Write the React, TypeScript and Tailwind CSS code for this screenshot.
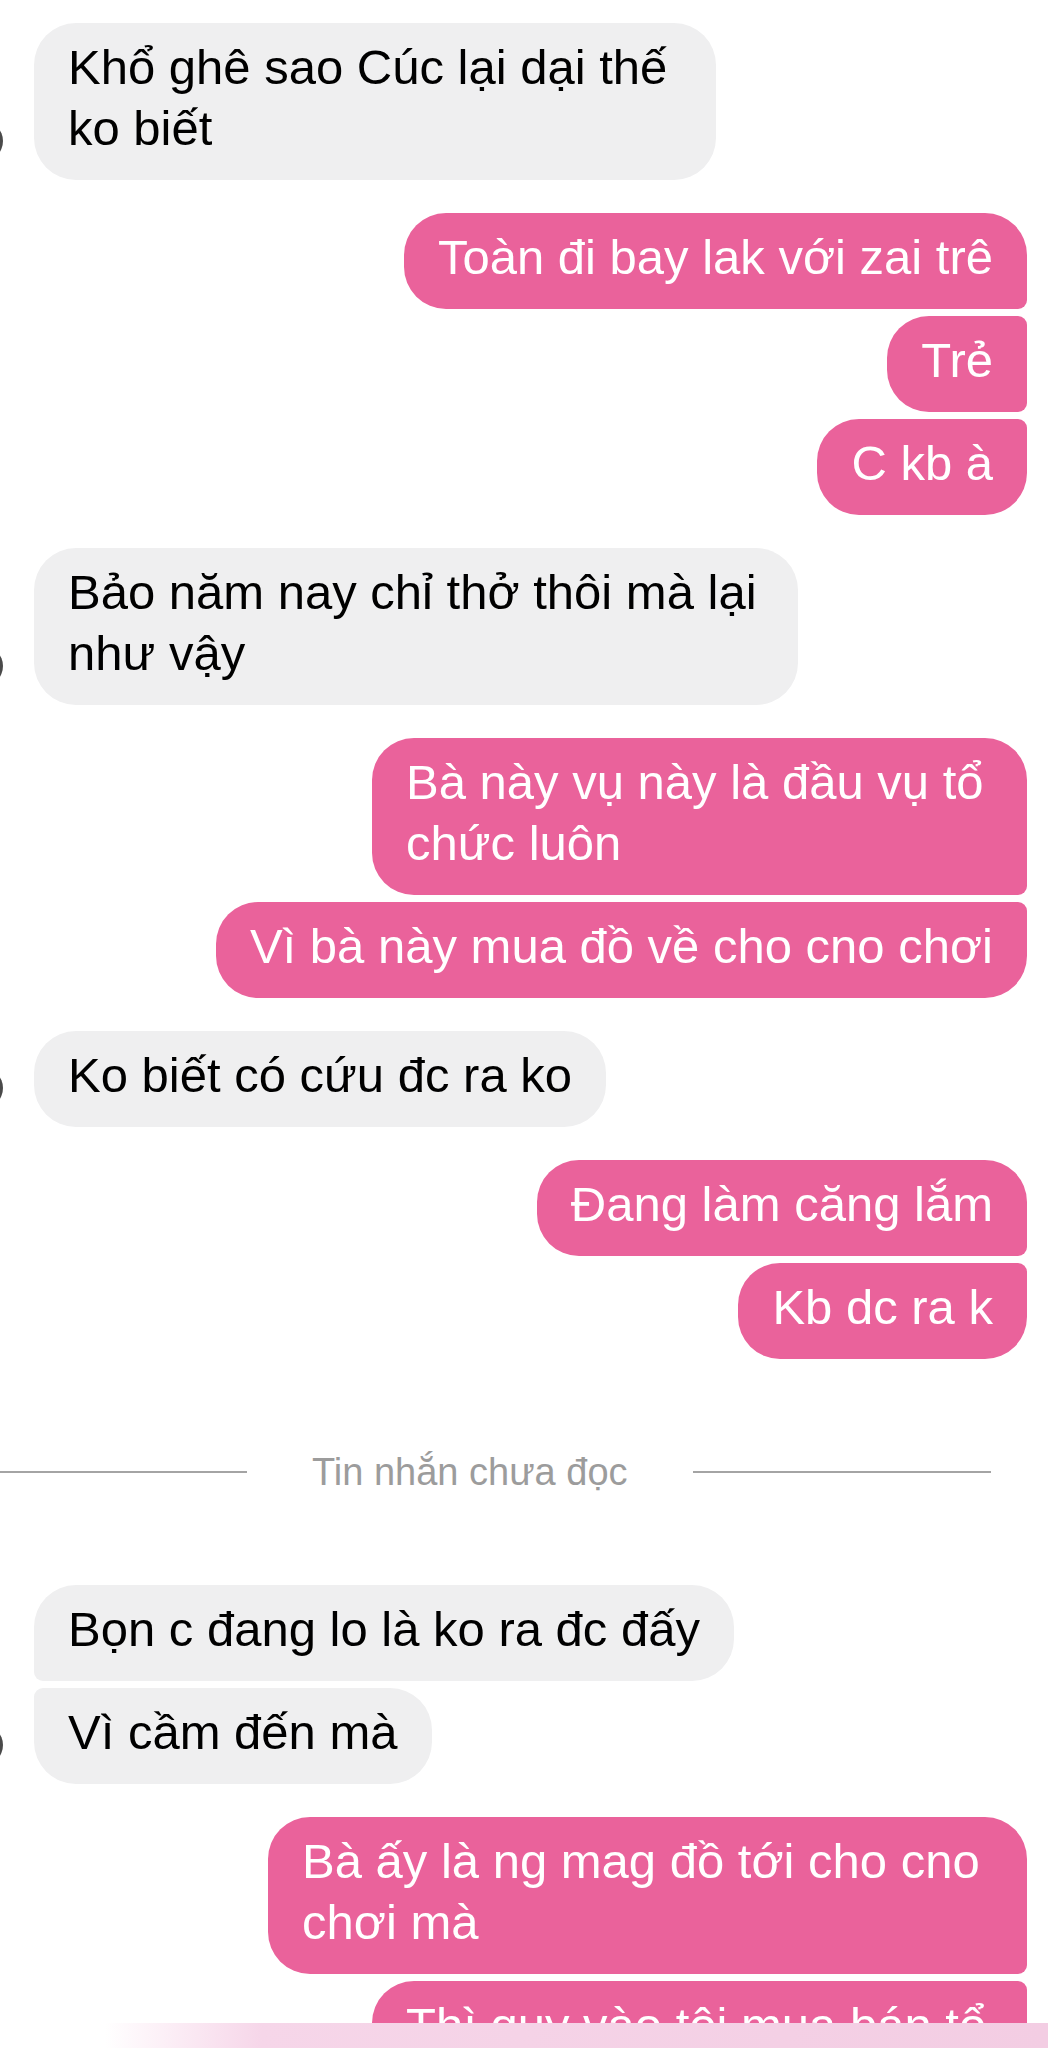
type Pos = "single" | "first" | "middle" | "last";

type Msg = { lines: string[]; pos: Pos; w?: string };
type Group = { from: "me" | "them"; msgs: Msg[] };

// corner shapes, Messenger style: grouped bubbles get a tight corner on the inner side
const sentCorners: Record<Pos, string> = {
  single: "rounded-tl-[42px] rounded-bl-[42px] rounded-tr-[42px] rounded-br-[42px]",
  first: "rounded-tl-[42px] rounded-bl-[42px] rounded-tr-[42px] rounded-br-[9px]",
  middle: "rounded-tl-[42px] rounded-bl-[42px] rounded-tr-[9px] rounded-br-[9px]",
  last: "rounded-tl-[42px] rounded-bl-[42px] rounded-tr-[9px] rounded-br-[42px]",
};

const recvCorners: Record<Pos, string> = {
  single: "rounded-tl-[42px] rounded-bl-[42px] rounded-tr-[42px] rounded-br-[42px]",
  first: "rounded-tl-[42px] rounded-bl-[9px] rounded-tr-[42px] rounded-br-[42px]",
  middle: "rounded-tl-[9px] rounded-bl-[9px] rounded-tr-[42px] rounded-br-[42px]",
  last: "rounded-tl-[9px] rounded-bl-[42px] rounded-tr-[42px] rounded-br-[42px]",
};

// wrapped bubbles keep the width of the wrap box, not of the text
const before: Group[] = [
  { from: "them", msgs: [{ lines: ["Khổ ghê sao Cúc lại dại thế", "ko biết"], pos: "single", w: "w-[682px]" }] },
  {
    from: "me",
    msgs: [
      { lines: ["Toàn đi bay lak với zai trê"], pos: "first" },
      { lines: ["Trẻ"], pos: "middle" },
      { lines: ["C kb à"], pos: "last" },
    ],
  },
  { from: "them", msgs: [{ lines: ["Bảo năm nay chỉ thở thôi mà lại", "như vậy"], pos: "single", w: "w-[764px]" }] },
  {
    from: "me",
    msgs: [
      { lines: ["Bà này vụ này là đầu vụ tổ", "chức luôn"], pos: "first", w: "w-[655px]" },
      { lines: ["Vì bà này mua đồ về cho cno chơi"], pos: "last" },
    ],
  },
  { from: "them", msgs: [{ lines: ["Ko biết có cứu đc ra ko"], pos: "single" }] },
  {
    from: "me",
    msgs: [
      { lines: ["Đang làm căng lắm"], pos: "first" },
      { lines: ["Kb dc ra k"], pos: "last" },
    ],
  },
];

const after: Group[] = [
  {
    from: "them",
    msgs: [
      { lines: ["Bọn c đang lo là ko ra đc đấy"], pos: "first" },
      { lines: ["Vì cầm đến mà"], pos: "last" },
    ],
  },
  {
    from: "me",
    msgs: [
      { lines: ["Bà ấy là ng mag đồ tới cho cno", "chơi mà"], pos: "first", w: "w-[759px]" },
      { lines: ["Thì quy vào tội mua bán tổ"], pos: "last", w: "w-[655px]" },
    ],
  },
];

const Bubble = ({ msg, mine }: { msg: Msg; mine: boolean }) => (
  <div
    className={`px-[34px] pt-[14px] pb-[21px] text-[49px] leading-[61px] whitespace-nowrap ${msg.w ?? ""} ${
      mine ? `bg-[#ea629b] text-white ${sentCorners[msg.pos]}` : `bg-[#efeff0] text-black ${recvCorners[msg.pos]}`
    }`}
  >
    {msg.lines.map((l, i) => (
      <div key={i}>{l}</div>
    ))}
  </div>
);

const ChatGroup = ({ group }: { group: Group }) => {
  if (group.from === "me") {
    return (
      <div className="flex flex-col items-end gap-[7px] pr-[21px]">
        {group.msgs.map((m, i) => (
          <Bubble key={i} msg={m} mine />
        ))}
      </div>
    );
  }
  return (
    <div className="flex items-end gap-[31px]">
      {/* avatar, mostly scrolled off the left edge */}
      <div className="w-[40px] h-[40px] -ml-[37px] mb-[19px] shrink-0 rounded-full bg-[#4a4a4a]" />
      <div className="flex flex-col items-start gap-[7px]">
        {group.msgs.map((m, i) => (
          <Bubble key={i} msg={m} mine={false} />
        ))}
      </div>
    </div>
  );
};

export default function App() {
  return (
    <div className="relative h-[2048px] w-[1048px] overflow-hidden bg-white font-['Liberation_Sans',Arial,sans-serif]">
      <div className="flex flex-col gap-[33px] pt-[23px]">
        {before.map((g, i) => (
          <ChatGroup key={i} group={g} />
        ))}

        {/* unread divider */}
        <div className="flex items-center my-[58px]">
          <div className="w-[247px] h-[2px] bg-[#a4a4a4]" />
          <span className="mx-[65px] text-[38px] leading-[44px] text-[#9c9c9c] whitespace-nowrap">Tin nhắn chưa đọc</span>
          <div className="w-[298px] h-[2px] bg-[#a4a4a4]" />
        </div>

        {after.map((g, i) => (
          <ChatGroup key={i} group={g} />
        ))}
      </div>

      {/* composer bar peeking in at the bottom */}
      <div className="absolute left-0 right-0 bottom-0 h-[25px] bg-linear-to-r from-white from-10% via-[#f6d6e9] via-25% to-[#f3cde3]" />
    </div>
  );
}
